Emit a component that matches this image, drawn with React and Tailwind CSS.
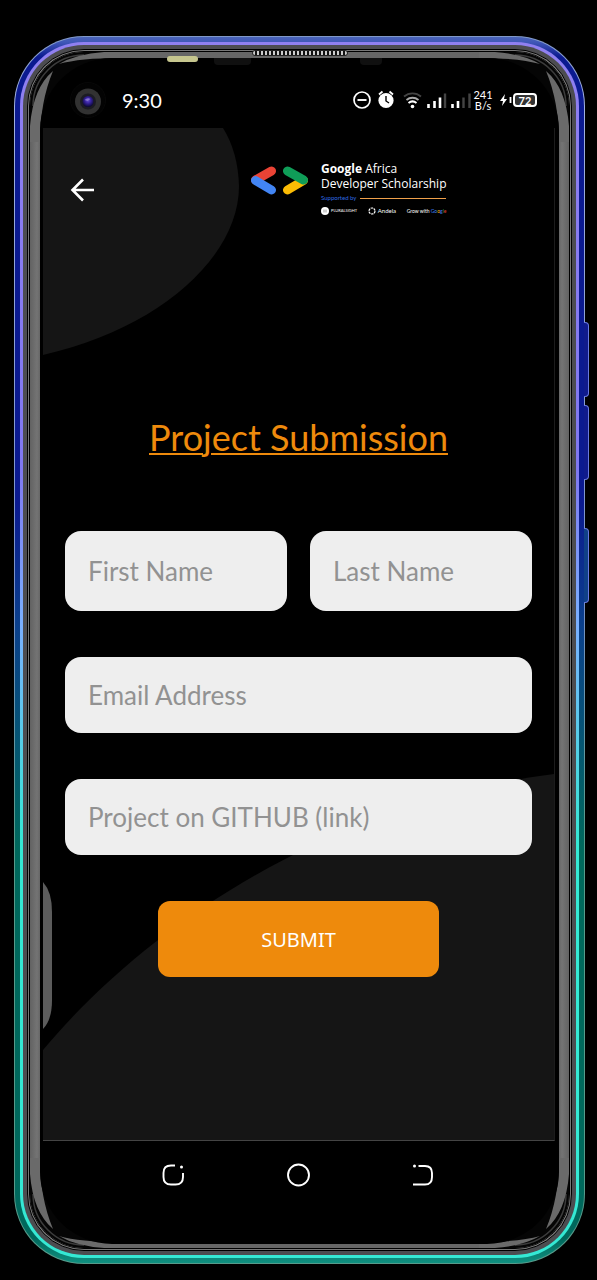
import React from "react";

function Field({ id, label, tall }) {
  return (
    <div className={tall ? "relative min-w-0 flex-1" : "relative w-full"}>
      <input
        id={id}
        name={id}
        placeholder=" "
        className={
          "peer block w-full rounded-2xl bg-[#eeeeee] px-[23px] text-[26px] text-[#333] outline-none " +
          (tall ? "h-20" : "h-19")
        }
      />
      <label
        htmlFor={id}
        className="pointer-events-none invisible absolute inset-y-0 left-[23px] flex items-center text-[26px] whitespace-nowrap text-[#929292] peer-placeholder-shown:visible"
      >
        {label}
      </label>
    </div>
  );
}

function StatusIcons() {
  return (
    <svg viewBox="0 0 120 24" className="h-6 w-[120px]" fill="none" aria-hidden="true">
      <circle cx="11" cy="12" r="8" stroke="#fff" strokeWidth="1.7" />
      <path d="M6.5 12h9" stroke="#fff" strokeWidth="1.9" />
      <circle cx="35" cy="12.5" r="7.6" fill="#fff" />
      <path d="M28 6.500l3.500-3M42 6.500l-3.500-3" stroke="#fff" strokeWidth="1.800" />
      <path d="M35 8v5l3 2" stroke="#000" strokeWidth="1.400" />
      <path d="M53 8.500c5-4.200 12-4.200 17 0" stroke="#444" strokeWidth="1.800" />
      <path d="M55.500 12c3.500-3 8.500-3 12 0" stroke="#aaa" strokeWidth="1.800" />
      <path d="M57.500 15c2.500-2 5.500-2 8 0" stroke="#fff" strokeWidth="2" />
      <circle cx="61.500" cy="18.500" r="1.800" fill="#fff" />
      <path d="M77.500 16v4M83.500 13v7M89 9.500V20" stroke="#fff" strokeWidth="2.600" />
      <path d="M94 5.500V20" stroke="#444" strokeWidth="2.400" />
      <path d="M101.500 16v4M107 13v7" stroke="#fff" strokeWidth="2.600" />
      <path d="M112.500 9.500V20M118.500 5.500V20" stroke="#444" strokeWidth="2.400" />
    </svg>
  );
}

function StatusBar() {
  return (
    <header className="flex h-[70px] items-center pt-[14px] text-white">
      <svg viewBox="0 0 36 36" className="ml-[30px] size-9" aria-hidden="true">
        <defs>
          <radialGradient id="lens" cx="0.5" cy="0.4" r="0.6">
            <stop offset="0" stopColor="#6550c8" />
            <stop offset="0.4" stopColor="#3a24a5" />
            <stop offset="1" stopColor="#0a0730" />
          </radialGradient>
        </defs>
        <circle cx="18" cy="18" r="17.500" fill="#030303" stroke="#080808" />
        <circle cx="18" cy="19.500" r="13" fill="#323232" />
        <circle cx="18" cy="19.500" r="8" fill="#1c1c24" />
        <circle cx="18" cy="19.500" r="5.500" fill="url(#lens)" />
        <path d="M14.500 18q3-3 6-1l-3 2z" fill="#a89ae0" opacity=".6" />
      </svg>
      <span className="ml-4 text-xl">9:30</span>
      <div className="mr-[22px] ml-auto flex items-center">
        <StatusIcons />
        <span className="mr-0.5 ml-0.5 w-5 text-center text-[11px] leading-[11px]">241 B/s</span>
        <svg viewBox="0 0 14 16" className="ml-1 h-4 w-[14px]" aria-hidden="true">
          <path d="M6 2L1 9h3L3 14l5-7H5z" fill="#fff" />
          <path d="M11.500 5v6" stroke="#fff" strokeWidth="1.800" />
        </svg>
        <span className="flex h-[14px] w-6 items-center justify-center rounded-sm border-2 border-white bg-[#333] text-[11px] leading-none font-bold">72</span>
      </div>
    </header>
  );
}

function Logo() {
  return (
    <div className="ml-[153px] flex items-start">
      <svg viewBox="0 0 60 32" className="mt-0.5 h-8 w-[60px] shrink-0" fill="none" strokeWidth="9" strokeLinecap="round" aria-hidden="true">
        <path d="M6.500 17L22.500 8" stroke="#ea4335" />
        <path d="M54.500 17.500L38.500 27" stroke="#fbbc04" />
        <path d="M6.500 17.500L22.500 27" stroke="#4285f4" />
        <path d="M38.500 8L54.500 17" stroke="#0f9d58" />
      </svg>
      <div className="ml-3 shrink-0 text-white">
        <p className="font-['Open_Sans',sans-serif] text-xs leading-[15px]">
          <b>Google</b> Africa
          <br />
          Developer Scholarship
        </p>
        <div className="mt-1 flex items-center gap-1 text-[6px] leading-[6px] text-[#2f6ae0]">
          <span>Supported by</span>
          <span className="h-px flex-1 bg-[#f0a04a]" />
        </div>
        <div className="mt-1.5 flex items-center justify-between text-[5px] leading-[8px]">
          <span className="flex items-center gap-0.5">
            <svg viewBox="0 0 8 8" className="size-2" aria-hidden="true">
              <circle cx="4" cy="4" r="4" fill="#fff" />
              <path d="M3 2.500v3M5 2.500v3" stroke="#777" strokeWidth=".7" />
            </svg>
            <span className="text-[4px]">PLURALSIGHT</span>
          </span>
          <span className="flex items-center gap-0.5 text-[6px]">
            <svg viewBox="0 0 8 8" className="size-2" aria-hidden="true">
              <circle cx="4" cy="4" r="3" fill="none" stroke="#fff" strokeWidth="1.200" strokeDasharray="2.400 .7" />
            </svg>
            Andela
          </span>
          <span>
            Grow with <span className="text-[#4285f4]">Go</span><span className="text-[#fbbc04]">o</span><span className="text-[#4285f4]">g</span><span className="text-[#34a853]">l</span><span className="text-[#ea4335]">e</span>
          </span>
        </div>
      </div>
    </div>
  );
}

function Backdrop() {
  return (
    <svg viewBox="0 0 511 1012" preserveAspectRatio="none" className="absolute inset-0 -z-10 size-full" aria-hidden="true">
      <path d="M0 0H180Q195 24 196 58C196 128 118 200 0 227z" fill="#151515" />
      <path d="M0 922C110 790 300 672 511 646V1012H0z" fill="#151515" />
      <path d="M0 754Q9 764 9 784V872Q9 892 0 901z" fill="#5c5c5c" />
    </svg>
  );
}

function Screen() {
  return (
    <main className="relative isolate mr-1 ml-[3px] flex grow flex-col border-r border-b border-r-[#1c1c1c] border-b-[#444] pt-[33px]">
      <Backdrop />
      <div className="flex h-14 items-start pl-[27px]">
        <button type="button" aria-label="Back" className="mt-4">
          <svg viewBox="0 0 26 26" className="size-[26px]" fill="none" stroke="#fff" strokeWidth="2.600" aria-hidden="true">
            <path d="M24 13H3M13 2.500L2.500 13L13 23.500" />
          </svg>
        </button>
        <Logo />
      </div>
      <form className="mt-[200px] flex flex-col px-[22px]" onSubmit={(e) => e.preventDefault()}>
        <h1 className="text-center text-4xl leading-10 text-[#ee8a0c] underline decoration-2 underline-offset-2">Project Submission</h1>
        <div className="mt-[74px] flex gap-[23px]">
          <Field id="first-name" label="First Name" tall />
          <Field id="last-name" label="Last Name" tall />
        </div>
        <div className="mt-[46px] flex flex-col gap-[46px]">
          <Field id="email" label="Email Address" />
          <Field id="project" label="Project on GITHUB (link)" />
        </div>
        <button className="mt-[46px] h-19 w-3/5 self-center rounded-xl bg-[#ee8a0c] pt-0.5 font-['Noto_Sans',sans-serif] text-xl text-white">SUBMIT</button>
      </form>
    </main>
  );
}

function NavBar() {
  return (
    <nav className="mr-1 ml-[3px] flex h-[103px] items-start justify-center gap-[99px] pt-[21px] text-white">
      <button type="button" aria-label="Recent apps">
        <svg viewBox="0 0 26 26" className="size-[26px]" fill="none" stroke="currentColor" strokeWidth="1.900" aria-hidden="true">
          <path d="M14 3.500H10Q2.500 3.500 2.500 11V15Q2.500 22.500 10 22.500H14.500Q22 22.500 22 15V11" />
          <circle cx="20.500" cy="5" r="1.500" fill="currentColor" stroke="none" />
        </svg>
      </button>
      <button type="button" aria-label="Home">
        <svg viewBox="0 0 26 26" className="size-[26px]" fill="none" stroke="currentColor" strokeWidth="1.900" aria-hidden="true">
          <circle cx="12.500" cy="13" r="10.500" />
        </svg>
      </button>
      <button type="button" aria-label="Go back">
        <svg viewBox="0 0 26 26" className="size-[26px]" fill="none" stroke="currentColor" strokeWidth="1.900" aria-hidden="true">
          <path d="M7.500 4H14Q21 4 21 11V15Q21 22.500 14 22.500H2" />
          <circle cx="3.500" cy="4" r="1.500" fill="currentColor" stroke="none" />
        </svg>
      </button>
    </nav>
  );
}

function SideButtons() {
  const key = "w-1.5 rounded-r-sm border border-l-0 border-[#6878df]";
  return (
    <div className="absolute top-[286px] -right-1 -z-10" aria-hidden="true">
      <div className={key + " h-[75px] bg-[#101b8c]"} />
      <div className={key + " mt-2 h-[75px] bg-[#101b8c]"} />
      <div className={key + " mt-12 h-[75px] bg-[#104088]"} />
    </div>
  );
}

function GlassCorner({ className }) {
  return (
    <svg viewBox="0 0 90 90" className={"absolute size-[90px] " + className} fill="none" aria-hidden="true">
      <path d="M0 90V54A54 54 0 0 1 54 0H90V90z" fill="#050505" />
      <path d="M3 54A51 51 0 0 1 54 3" stroke="#3c3c3c" strokeWidth="1.500" />
      <path d="M0 90V74Q3 36 23 19Q10 50 10 90z" fill="#6a6a6a" />
      <path d="M90 0H74Q46 2 29 12Q50 6 90 6z" fill="#6a6a6a" />
    </svg>
  );
}

export default function App() {
  return (
    <div className="flex min-h-screen flex-col bg-black px-3.5 pt-9 pb-4 font-['Lato',sans-serif]">
      <div className="relative isolate mr-[-2px] flex grow flex-col rounded-[70px] bg-[linear-gradient(#8098c8,#a0b0e0_5%,#7890c8_45%,#579a8a_65%)] p-px">
        <SideButtons />
        <div className="flex grow flex-col rounded-[69px] bg-[linear-gradient(#4a64b8,#4058b8_5px,#0b1a90_20px,#0b1a90_38%,#0b408c_48%,#00685c_66%,#00685c_98%,#109080)] p-[5px]">
          <div className="flex grow flex-col rounded-[64px] bg-[linear-gradient(#9080f0,#8078f0_35%,#7ab0ff_48%,#35e8d4_66%)] p-[3px]">
            <div className="flex grow flex-col rounded-[61px] bg-[#4c4c50] p-1">
              <div className="flex grow flex-col rounded-[57px] border border-black bg-[#777] p-px">
                <div className="flex grow flex-col rounded-[55px] border border-black bg-[#6a6a6a]">
                  <div className="relative flex grow flex-col rounded-[54px] bg-[linear-gradient(90deg,#626262,#747474_7px,#666_10px,#666_calc(100%-10px),#747474_calc(100%-7px),#626262)] px-[10px] pt-1.5 pb-1">
                    <GlassCorner className="top-0 left-0" />
                    <GlassCorner className="top-0 right-0 -scale-x-100" />
                    <GlassCorner className="bottom-0 left-0 -scale-y-100" />
                    <GlassCorner className="right-0 bottom-0 -scale-100" />
                    <div className="relative flex grow flex-col rounded-[72px] bg-black">
                      <div className="absolute -top-2 left-1/2 h-1.5 w-24 -translate-x-1/2 rounded-full border border-[#222] bg-[repeating-linear-gradient(90deg,#ccc_0px_2px,#111_2px_4px)]" aria-hidden="true" />
                      <div className="absolute -top-0.5 left-[127px] h-1.5 w-[31px] rounded-sm bg-[#c6c68e]" aria-hidden="true" />
                      <div className="absolute top-0 left-[174px] h-[7px] w-[37px] rounded-b-sm bg-[#101010]" aria-hidden="true" />
                      <div className="absolute top-0 left-[320px] h-[7px] w-[22px] rounded-b-sm bg-[#101010]" aria-hidden="true" />
                      <StatusBar />
                      <Screen />
                      <NavBar />
                    </div>
                  </div>
                </div>
              </div>
            </div>
          </div>
        </div>
      </div>
    </div>
  );
}
